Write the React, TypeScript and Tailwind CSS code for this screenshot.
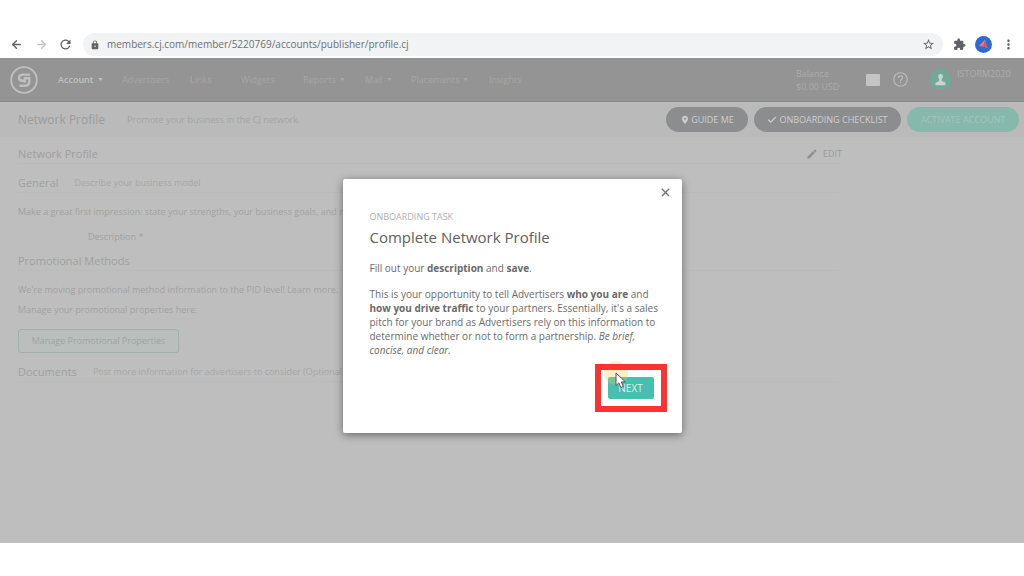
import type { ReactNode } from "react";
import { ArrowLeft, ArrowRight, Check, X } from "lucide-react";
import { MdLocationOn, MdLock, MdMoreVert, MdRefresh, MdStarBorder } from "react-icons/md";

const menus = [
  { label: "Advertisers", width: "w-[68px]", caret: false },
  { label: "Links", width: "w-[51px]", caret: false },
  { label: "Widgets", width: "w-[62px]", caret: false },
  { label: "Reports", width: "w-[62px]", caret: true },
  { label: "Mail", width: "w-[46px]", caret: true },
  { label: "Placements", width: "w-[78px]", caret: true },
  { label: "Insights", width: "w-[50px]", caret: false },
];

function Caret() {
  return (
    <svg viewBox="0 0 6 4" className="h-[3px] w-[5px]" aria-hidden="true">
      <path d="M0 0h6L3 4z" fill="currentColor" />
    </svg>
  );
}

function BrowserBar() {
  return (
    <header className="flex h-[25px] items-center bg-white pr-2 pb-[2px] pl-[10px] text-[#5f6368]">
      <button aria-label="Back" className="mr-3">
        <ArrowLeft size={13} strokeWidth={2.6} />
      </button>
      <button aria-label="Forward" className="mr-[10px] text-[#c3c5c7]">
        <ArrowRight size={13} strokeWidth={2.4} />
      </button>
      <button aria-label="Reload" className="mr-[10px]">
        <MdRefresh size={15} />
      </button>
      <div className="flex h-[23px] flex-1 items-center rounded-full bg-[#f1f3f4] pr-2 pl-[7px]">
        <MdLock size={10} className="mr-[7px] shrink-0" />
        <input
          aria-label="Address"
          defaultValue="members.cj.com/member/5220769/accounts/publisher/profile.cj"
          className="min-w-0 flex-1 bg-transparent text-[10px] text-[#6b6f73] outline-none"
        />
        <button aria-label="Bookmark this page">
          <MdStarBorder size={13} />
        </button>
      </div>
      <button aria-label="Extensions" className="ml-[10px]">
        <svg viewBox="0 0 24 24" className="size-[13px]" fill="currentColor" aria-hidden="true">
          <path d="M20.500 11H19V7a2 2 0 0 0-2-2h-4V3.500a2.500 2.500 0 0 0-5 0V5H4a2 2 0 0 0-2 2v3.800h1.500a2.700 2.700 0 0 1 0 5.400H2V20a2 2 0 0 0 2 2h3.800v-1.500a2.700 2.700 0 0 1 5.400 0V22H17a2 2 0 0 0 2-2v-4h1.500a2.500 2.500 0 0 0 0-5z" />
        </svg>
      </button>
      <button aria-label="Profile" className="ml-[9px]">
        <svg viewBox="0 0 18 18" className="size-[17px]" aria-hidden="true">
          <circle cx="9" cy="9" r="9" fill="#2b6bd8" />
          <path d="M4 10.500 10.500 4l2.800 9-3.500-1.700z" fill="#f0777f" />
          <path d="m10.500 4-1.500 6-5 .5 5.800.8 3.500 1.700z" fill="#d9536c" />
        </svg>
      </button>
      <button aria-label="Menu" className="ml-[9px]">
        <MdMoreVert size={15} />
      </button>
    </header>
  );
}

function NavBar() {
  return (
    <nav className="flex h-[44px] items-center border-b border-[#8b8b8b] bg-[#949494] pl-[10px] text-[9px] text-[#a6a6a6]">
      <a href="#home" aria-label="Home" className="mr-5">
        <svg viewBox="0 0 28 28" className="size-7" fill="none" stroke="#c0c0c0" aria-hidden="true">
          <circle cx="14" cy="14" r="12.800" strokeWidth="1.800" />
          <path d="M20 8.600h-7q-4 0-4 3.200 0 3 3.400 3h2.400" strokeWidth="2.400" />
          <path d="M9.500 19.800h5.200q4.600 0 4.600-4.200v-3.300h-4.500v4.500" strokeWidth="2.400" />
        </svg>
      </a>
      <a href="#account" className="flex w-[64px] items-center gap-[5px] font-semibold text-[#c2c2c2]">
        Account
        <Caret />
      </a>
      {menus.map((menu) => (
        <a
          key={menu.label}
          href={`#${menu.label.toLowerCase()}`}
          className={`flex shrink-0 items-center gap-1 ${menu.width}`}
        >
          {menu.label}
          {menu.caret && <Caret />}
        </a>
      ))}
      <div className="ml-auto w-[70px] leading-[13px] text-[#ababab]">
        <p>Balance</p>
        <p>$0.00 USD</p>
      </div>
      <button aria-label="Messages" className="mr-[13px]">
        <svg viewBox="0 0 14 12" className="h-3 w-[14px]" aria-hidden="true">
          <rect width="14" height="12" rx="1" fill="#c4c4c4" />
        </svg>
      </button>
      <button aria-label="Help" className="mr-[22px]">
        <svg viewBox="0 0 16 16" className="size-[15px]" fill="none" stroke="#bdbdbd" aria-hidden="true">
          <circle cx="8" cy="8" r="7.200" strokeWidth="1.200" />
          <path d="M5.800 6.300q0-2.200 2.200-2.200t2.200 2q0 1.200-1.200 1.800-1 .5-1 1.600" strokeWidth="1.200" />
          <path d="M8 10.700v1.400" strokeWidth="1.300" />
        </svg>
      </button>
      <a href="#user" className="flex w-[94px] items-center gap-[6px] text-[#acacac]">
        <svg viewBox="0 0 21 21" className="size-[21px]" aria-hidden="true">
          <circle cx="10.500" cy="10.500" r="10.500" fill="#6faa98" />
          <path
            d="M10.500 5a2.400 2.400 0 0 1 2.300 2.600q0 1.600-1 2.500v2l3.700 1.700v2.400H5.500v-2.400l3.700-1.700v-2q-1-.9-1-2.500A2.400 2.400 0 0 1 10.500 5z"
            fill="#d0d0d0"
          />
        </svg>
        <span className="pb-3">ISTORM2020</span>
      </a>
    </nav>
  );
}

function PageHeader() {
  return (
    <div className="flex h-[35px] items-center bg-[#bababa] pr-[5px] pl-[18px]">
      <h1 className="mr-[22px] text-[12px] text-[#9c9c9c]">Network Profile</h1>
      <p className="text-[9px] text-[#a5a5a5]">Promote your business in the CJ network.</p>
      <div className="ml-auto flex gap-[6px] text-[9px] text-[#cfcfcf]">
        <button className="flex h-[25px] w-[82px] items-center justify-center gap-px rounded-full bg-[#8c8d8e]">
          <MdLocationOn size={10} />
          GUIDE ME
        </button>
        <button className="flex h-[25px] w-[147px] items-center justify-center gap-[2px] rounded-full bg-[#8c8d8e]">
          <Check size={10} strokeWidth={3} />
          ONBOARDING CHECKLIST
        </button>
        <button className="h-[25px] w-[112px] rounded-full bg-[#87b8ac] text-[#a5c4bc]">
          ACTIVATE ACCOUNT
        </button>
      </div>
    </div>
  );
}

function SectionHeading({ title, hint }: { title: string; hint?: ReactNode }) {
  return (
    <div className="flex h-5 w-[820px] items-center gap-4 border-b border-[#bababa]">
      <h2 className="text-[11px] text-[#a0a0a0]">{title}</h2>
      {hint && <p className="text-[9px] text-[#a7a7a7]">{hint}</p>}
    </div>
  );
}

function ProfilePage() {
  return (
    <main className="flex flex-col items-start pt-[7px] pl-[18px] text-[9px] leading-[14px] text-[#a2a2a2]">
      <div className="flex h-5 w-[824px] items-center justify-between border-b border-[#bababa]">
        <h2 className="text-[11px] text-[#9f9f9f]">Network Profile</h2>
        <button className="flex items-center gap-[5px] text-[#9c9c9c]">
          <svg viewBox="0 0 24 24" className="size-3" fill="#8f8f8f" aria-hidden="true">
            <path d="M3 17.250V21h3.750L17.800 9.950 14.050 6.200zM20.700 7.050a1 1 0 0 0 0-1.400l-2.350-2.350a1 1 0 0 0-1.400 0L15.100 5.100l3.750 3.750z" />
          </svg>
          EDIT
        </button>
      </div>
      <div className="mt-[9px]">
        <SectionHeading title="General" hint="Describe your business model" />
      </div>
      <p className="mt-3">
        Make a great first impression: state your strengths, your business goals, and m
      </p>
      <p className="mt-[11px] ml-[70px]">Description *</p>
      <div className="mt-[7px]">
        <SectionHeading title="Promotional Methods" />
      </div>
      <p className="mt-3">
        We're moving promotional method information to the PID level! Learn more.
      </p>
      <p className="mt-[6px]">Manage your promotional properties here:</p>
      <button className="mt-3 h-6 w-[161px] rounded-[3px] border border-[#a0b0ac] bg-[#babfbe] text-[#9ba5a3]">
        Manage Promotional Properties
      </button>
      <div className="mt-[9px]">
        <SectionHeading title="Documents" hint="Post more information for advertisers to consider (Optional)" />
      </div>
    </main>
  );
}

function Spotlight() {
  return (
    <span className="pointer-events-none absolute inset-0" aria-hidden="true">
      <span className="absolute top-[-3px] left-[9px] size-6 rounded-full bg-[#f2c94c]/30" />
      <span className="absolute inset-0 border-[6px] border-[#ff3232]" />
      <svg viewBox="0 0 12 18" className="absolute top-2 left-5 h-[18px] w-3">
        <path
          d="M1 1v12.500l2.900-2.600 2 4.600 2.400-1-2-4.500 4-.2z"
          fill="#fff"
          stroke="#555"
          strokeWidth="1"
        />
      </svg>
    </span>
  );
}

function OnboardingDialog() {
  return (
    <section
      role="dialog"
      aria-labelledby="task-title"
      className="flex w-[339px] flex-col rounded-[2px] bg-white pb-[21px] pl-[27px] text-[10px] leading-[14px] text-[#6a6a6a] shadow-[0_2px_8px_rgba(0,0,0,0.45)]"
    >
      <button aria-label="Close" className="mt-[7px] mr-[10px] self-end text-[#777777]">
        <X size={13} strokeWidth={2.6} />
      </button>
      <p className="mt-[11px] text-[9px] text-[#b0b0b0]">ONBOARDING TASK</p>
      <h2 id="task-title" className="mt-[3px] text-[15px] leading-5 text-[#606060]">
        Complete Network Profile
      </h2>
      <p className="mt-[14px]">
        Fill out your <strong>description</strong> and <strong>save</strong>.
      </p>
      <p className="mt-3">
        This is your opportunity to tell Advertisers <strong>who you are</strong> and
        <br />
        <strong>how you drive traffic</strong> to your partners. Essentially, it's a sales
        <br />
        pitch for your brand as Advertisers rely on this information to
        <br />
        determine whether or not to form a partnership. <em>Be brief,</em>
        <br />
        <em>concise, and clear.</em>
      </p>
      <div className="relative mt-[7px] mr-[15px] self-end p-[13px]">
        <button className="block h-[22px] w-[46px] rounded-[2px] bg-[#46bfb0] text-[#d8f3ef]">
          NEXT
        </button>
        <Spotlight />
      </div>
    </section>
  );
}

export default function App() {
  return (
    <div className="min-h-screen bg-white py-[33px] font-['Open_Sans',sans-serif]">
      <BrowserBar />
      <div className="relative min-h-[485px] bg-[#bebebe]">
        <NavBar />
        <PageHeader />
        <ProfilePage />
        <div className="absolute inset-0 flex items-center justify-center pt-[11px]">
          <OnboardingDialog />
        </div>
      </div>
    </div>
  );
}
